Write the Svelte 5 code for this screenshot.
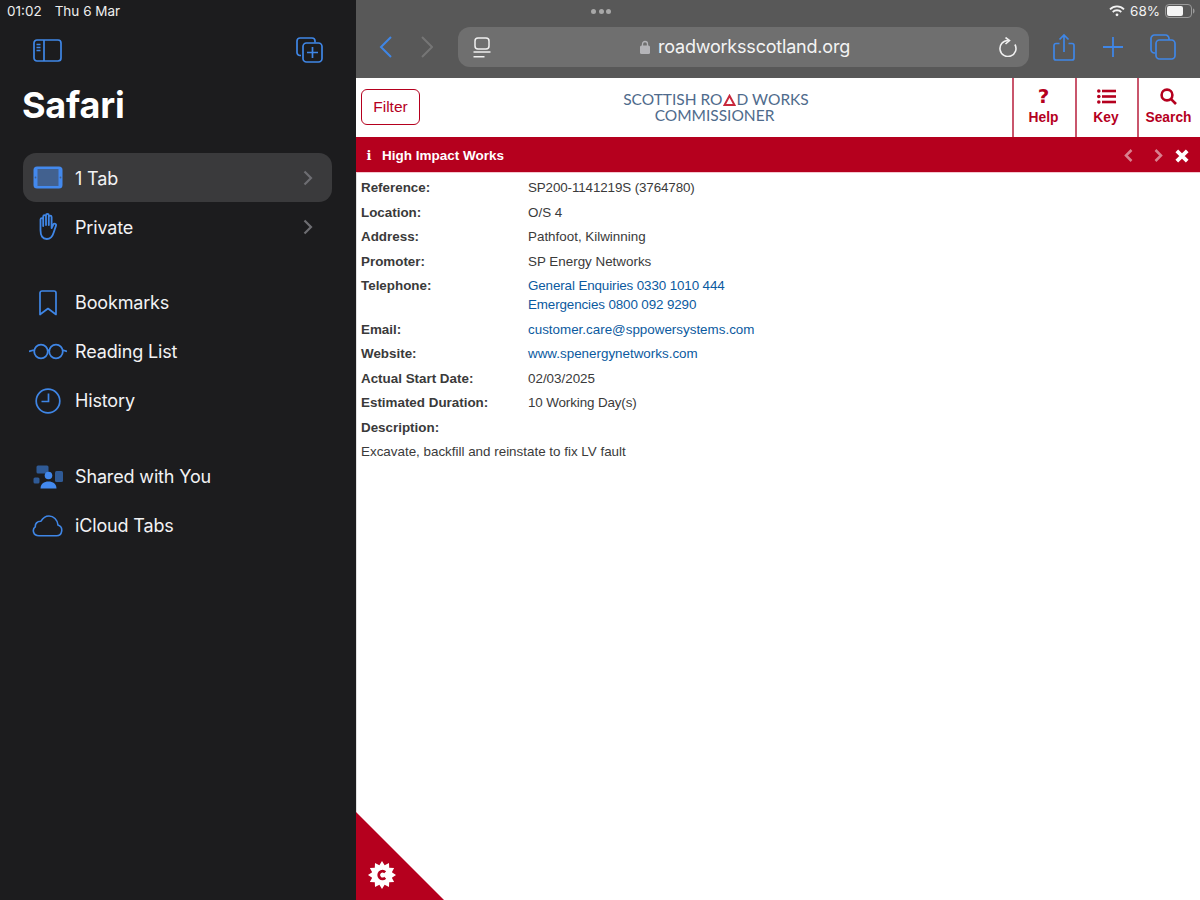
<script>
  const rows = [
    { label: 'Reference:', value: 'SP200-1141219S (3764780)', tight: true },
    { label: 'Location:', value: 'O/S 4' },
    { label: 'Address:', value: 'Pathfoot, Kilwinning' },
    { label: 'Promoter:', value: 'SP Energy Networks' },
    { label: 'Telephone:', value: 'General Enquiries 0330 1010 444\nEmergencies 0800 092 9290', link: true, tight: true },
    { label: 'Email:', value: 'customer.care@sppowersystems.com', link: true },
    { label: 'Website:', value: 'www.spenergynetworks.com', link: true },
    { label: 'Actual Start Date:', value: '02/03/2025' },
    { label: 'Estimated Duration:', value: '10 Working Day(s)', tight: true },
    { label: 'Description:', value: '' }
  ];

  // 12 point badge for the corner logo
  const star = Array.from({ length: 24 }, (_, i) => {
    const r = i % 2 ? 10.2 : 14;
    const a = (i * Math.PI) / 12;
    return `${(r * Math.sin(a)).toFixed(2)},${(-r * Math.cos(a)).toFixed(2)}`;
  }).join(' ');
</script>

<div class="screen">
  <aside class="sidebar">
    <div class="clock"><span>01:02</span><span>Thu 6 Mar</span></div>
    <div class="side-tools">
      <svg width="30" height="23" viewBox="0 0 30 23" fill="none" stroke="#3f86e6" stroke-width="1.7">
        <rect x="1" y="1" width="27" height="21" rx="3" />
        <path d="M11 1v21M3.500 5.500h4M3.500 8.500h4M3.500 11.500h4" />
      </svg>
      <svg width="27" height="26" viewBox="0 0 27 26" fill="none" stroke="#3f86e6" stroke-width="1.7">
        <path d="M5 18.500H4a3 3 0 0 1-3-3V4a3 3 0 0 1 3-3h12a3 3 0 0 1 3 3v1.500" />
        <rect x="7" y="6" width="19" height="19" rx="3.500" />
        <path d="M16.500 10v11M11 15.500h11" />
      </svg>
    </div>
    <h1>Safari</h1>

    <nav class="group first">
      <div class="item active">
        <span class="ico">
          <svg width="30" height="23" viewBox="0 0 30 23">
            <rect x="0.500" y="0.500" width="29" height="22" rx="3.500" fill="#4389ee" />
            <rect x="4.500" y="3" width="21" height="17" fill="#42618f" />
            <circle cx="2.500" cy="11.500" r="0.900" fill="#42618f" />
            <circle cx="27.500" cy="11.500" r="0.900" fill="#42618f" />
          </svg>
        </span>
        <span class="name">1 Tab</span>
        <svg class="chev" width="10" height="16" viewBox="0 0 10 16" fill="none" stroke="#6d6d72" stroke-width="2.200"><path d="M1.500 1.500 8 8l-6.500 6.500" /></svg>
      </div>
      <div class="item">
        <span class="ico">
          <svg width="21" height="27" viewBox="0 0 21 27" fill="none" stroke="#3f86e6" stroke-width="1.800" stroke-linejoin="round" stroke-linecap="round">
            <path d="M3.500 17V6.500a1.300 1.300 0 0 1 2.700 0V13M6.200 13V3.500a1.400 1.400 0 0 1 2.800 0V12M9 12V2.300a1.400 1.400 0 0 1 2.800 0V12M11.800 12V4a1.400 1.400 0 0 1 2.800 0v11l1.700-3.500c.8-1.600 3.400-.8 2.700 1.100l-2.300 6.900C15.500 23.500 13.500 26 9.800 26 5.500 26 3.500 23 3.500 17" />
          </svg>
        </span>
        <span class="name">Private</span>
        <svg class="chev" width="10" height="16" viewBox="0 0 10 16" fill="none" stroke="#6d6d72" stroke-width="2.200"><path d="M1.500 1.500 8 8l-6.500 6.500" /></svg>
      </div>
    </nav>

    <nav class="group">
      <div class="item">
        <span class="ico">
          <svg width="18" height="26" viewBox="0 0 18 26" fill="none" stroke="#3f86e6" stroke-width="1.700" stroke-linejoin="round">
            <path d="M1 3a2 2 0 0 1 2-2h12a2 2 0 0 1 2 2v21.500l-8-6-8 6z" />
          </svg>
        </span>
        <span>Bookmarks</span>
      </div>
      <div class="item">
        <span class="ico">
          <svg width="38" height="17" viewBox="0 0 38 17" fill="none" stroke="#3f86e6" stroke-width="1.800">
            <circle cx="12" cy="8.500" r="6.800" />
            <circle cx="27" cy="8.500" r="6.800" />
            <path d="M0 8.500 5 7M18.500 7.500q1-.7 2 0M33.500 7l4.500 1.500" />
          </svg>
        </span>
        <span>Reading List</span>
      </div>
      <div class="item">
        <span class="ico">
          <svg width="26" height="26" viewBox="0 0 26 26" fill="none" stroke="#3f86e6" stroke-width="1.700">
            <circle cx="13" cy="13" r="11.800" />
            <path d="M13.500 5.500V13.500H6.500" />
          </svg>
        </span>
        <span>History</span>
      </div>
    </nav>

    <nav class="group last">
      <div class="item">
        <span class="ico">
          <svg width="30" height="24" viewBox="0 0 30 24">
            <rect x="3.500" y="0.500" width="12" height="8" rx="1.500" fill="#2f5a96" />
            <rect x="0.500" y="12.500" width="6" height="6" rx="1.500" fill="#2f5a96" />
            <rect x="22" y="6" width="8" height="11" rx="1.500" fill="#2f5a96" />
            <circle cx="15.500" cy="10.500" r="3.800" fill="#4389ee" />
            <path d="M7.500 23.500c0-4.500 3.500-7 8-7s8 2.500 8 7z" fill="#4389ee" />
          </svg>
        </span>
        <span>Shared with You</span>
      </div>
      <div class="item">
        <span class="ico">
          <svg width="31" height="22" viewBox="0 0 31 22" fill="none" stroke="#3f86e6" stroke-width="1.600" stroke-linejoin="round">
            <path d="M7 20.800h17.500a5.500 5.500 0 0 0 1.500-10.700C25.500 4.500 21.500 1 17 1c-4 0-6.500 2.500-8 5.200C5 6 3 9 3.300 11.800.200 13.800.500 20.800 7 20.800z" />
          </svg>
        </span>
        <span>iCloud Tabs</span>
      </div>
    </nav>
  </aside>

  <main class="main">
    <div class="chrome">
      <div class="status">
        <div class="dots"><i></i><i></i><i></i></div>
        <div class="sys">
          <svg width="16" height="12" viewBox="0 0 16 12" fill="none" stroke="#f2f2f2" stroke-width="1.800">
            <path d="M1 4.300a10 10 0 0 1 14 0" />
            <path d="M3.700 7a6.200 6.200 0 0 1 8.600 0" />
            <circle cx="8" cy="9.800" r="1.400" fill="#f2f2f2" stroke="none" />
          </svg>
          <span>68%</span>
          <svg width="30" height="14" viewBox="0 0 30 14">
            <rect x="0.500" y="0.500" width="26" height="13" rx="3.500" fill="none" stroke="#9a9a9a" />
            <rect x="2" y="2" width="16" height="10" rx="2" fill="#f5f5f5" />
            <path d="M28 4.500c1 .3 1.500 1.200 1.500 2.500s-.5 2.200-1.500 2.500z" fill="#9a9a9a" />
          </svg>
        </div>
      </div>
      <div class="toolbar">
        <svg class="back" width="13" height="22" viewBox="0 0 13 22" fill="none" stroke="#3f86e6" stroke-width="2"><path d="M12 1 2 11l10 10" /></svg>
        <svg class="fwd" width="12" height="22" viewBox="0 0 12 22" fill="none" stroke="#757575" stroke-width="2"><path d="M1 1l10 10L1 21" /></svg>
        <div class="urlbar">
          <svg width="18" height="21" viewBox="0 0 18 21" fill="none" stroke="#f0f0f0" stroke-width="1.500">
            <rect x="2" y="1" width="14" height="11" rx="3" />
            <path d="M0.500 15h17M0.500 19.800h11" />
          </svg>
          <div class="addr">
            <svg width="10" height="14" viewBox="0 0 10 14"><path d="M2.500 6V4a2.500 2.500 0 0 1 5 0v2" fill="none" stroke="#b4b4b8" stroke-width="1.300" /><rect y="5.500" width="10" height="8.500" rx="1.500" fill="#b4b4b8" /></svg>
            <span>roadworksscotland.org</span>
          </div>
          <svg width="18" height="20" viewBox="0 0 18 20" fill="none" stroke="#f0f0f0" stroke-width="1.600">
            <path d="M15.900 7.500A8 8 0 1 1 9 3.500" />
            <path d="M6.500 0.500 10.500 3.500 6.500 7" />
          </svg>
        </div>
        <svg class="t-share" width="22" height="27" viewBox="0 0 22 27" fill="none" stroke="#3f86e6" stroke-width="1.700">
          <path d="M6.500 9.500H3a2 2 0 0 0-2 2V24a2 2 0 0 0 2 2h16a2 2 0 0 0 2-2V11.500a2 2 0 0 0-2-2h-3.500" />
          <path d="M11 18V1.500M6.500 5.500 11 1l4.500 4.500" />
        </svg>
        <svg class="t-plus" width="20" height="20" viewBox="0 0 20 20" fill="none" stroke="#3f86e6" stroke-width="1.800"><path d="M10 0v20M0 10h20" /></svg>
        <svg class="t-tabs" width="26" height="26" viewBox="0 0 26 26" fill="none" stroke="#3f86e6" stroke-width="1.700">
          <path d="M5 19H4.500A3.500 3.500 0 0 1 1 15.500V4.500A3.500 3.500 0 0 1 4.500 1h11A3.500 3.500 0 0 1 19 4.500V6" />
          <rect x="6" y="6" width="19" height="19" rx="3.500" />
        </svg>
      </div>
    </div>

    <header class="site-head">
      <button class="filter">Filter</button>
      <div class="logo">
        <div>SCOTTISH RO<svg width="13" height="12" viewBox="0 0 13 12" fill="none" stroke="#c8283c" stroke-width="2"><path d="M6.500 1.800 11.500 11h-10z" /></svg>D WORKS</div>
        <div class="logo-sub">COMMISSIONER</div>
      </div>
      <div class="cell">
        <span class="q">?</span>
        <span>Help</span>
      </div>
      <div class="cell key">
        <svg width="19" height="15" viewBox="0 0 19 15" fill="#b5001e">
          <circle cx="1.800" cy="2" r="1.800" /><circle cx="1.800" cy="7.500" r="1.800" /><circle cx="1.800" cy="13" r="1.800" />
          <rect x="5" y="0.700" width="14" height="2.600" /><rect x="5" y="6.200" width="14" height="2.600" /><rect x="5" y="11.700" width="14" height="2.600" />
        </svg>
        <span>Key</span>
      </div>
      <div class="cell">
        <svg width="17" height="17" viewBox="0 0 17 17" fill="none" stroke="#b5001e" stroke-width="2.600">
          <circle cx="7" cy="7" r="5.400" /><path d="M10.800 10.800 16 16" />
        </svg>
        <span>Search</span>
      </div>
    </header>

    <div class="banner">
      <span class="info">i</span>
      <span class="title">High Impact Works</span>
      <svg class="b-prev" width="9" height="13" viewBox="0 0 9 13" fill="none" stroke="#d9808f" stroke-width="2.500"><path d="M7.500 1 2 6.500 7.500 12" /></svg>
      <svg class="b-next" width="9" height="13" viewBox="0 0 9 13" fill="none" stroke="#d9808f" stroke-width="2.500"><path d="M1.500 1 7 6.500 1.500 12" /></svg>
      <svg class="b-close" width="14" height="14" viewBox="0 0 14 14" fill="none" stroke="#fff" stroke-width="3.800"><path d="M1.800 1.800l10.400 10.400M12.200 1.800 1.800 12.200" /></svg>
    </div>

    <section class="details">
      {#each rows as row}
        <div class="row">
          <strong>{row.label}</strong>
          <span class:link={row.link} class:tight={row.tight}>{row.value}</span>
        </div>
      {/each}
      <p>Excavate, backfill and reinstate to fix LV fault</p>
    </section>

    <div class="corner">
      <svg width="30" height="30" viewBox="-15 -15 30 30">
        <polygon fill="#fff" points={star} />
        <path d="M3.200 -2.700A3.800 3.800 0 1 0 3.200 2.700" fill="none" stroke="#b5001e" stroke-width="2.800" />
      </svg>
    </div>
  </main>
</div>

<style>
  :global(body) {
    margin: 0;
    background: #fff;
  }

  .screen {
    display: flex;
    width: 1200px;
    height: 900px;
    overflow: hidden;
    font-family: "Liberation Sans", Arial, sans-serif;
  }

  .sidebar {
    width: 356px;
    flex: none;
    box-sizing: border-box;
    background: #1c1c1e;
    color: #f2f2f4;
    font-family: Inter, "Noto Sans", sans-serif;
  }

  .clock {
    display: flex;
    gap: 13px;
    padding: 3px 0 0 7px;
    height: 19px;
    font-size: 13.500px;
    line-height: 17px;
    color: #eee;
  }

  .side-tools {
    display: flex;
    justify-content: space-between;
    align-items: center;
    padding: 15px 33px 0 33px;
    height: 26px;
  }

  h1 {
    margin: 20px 0 0 22px;
    font-size: 36px;
    line-height: 44px;
    font-weight: 700;
    letter-spacing: -0.2px;
    color: #fff;
  }

  .group {
    margin: 0 24px 26px 23px;
  }

  .group.first {
    margin-top: 26px;
    margin-bottom: 27px;
  }

  .group.last {
    margin-top: 27px;
  }

  .item {
    display: flex;
    align-items: center;
    height: 49px;
    font-size: 18px;
    letter-spacing: -0.15px;
    border-radius: 13px;
  }

  .name {
    padding-top: 2px;
  }

  .active {
    background: #3a3a3c;
  }

  .ico {
    width: 49px;
    margin-right: 3px;
    display: flex;
    justify-content: center;
    flex: none;
  }

  .chev {
    margin-left: auto;
    margin-right: 19px;
  }

  .main {
    position: relative;
    flex: 1;
    background: #fff;
  }

  .chrome {
    height: 78px;
    background: #585858;
  }

  .status {
    display: flex;
    align-items: center;
    height: 22px;
    color: #f2f2f2;
    font-family: Inter, sans-serif;
    font-size: 13.500px;
  }

  .dots {
    display: flex;
    gap: 2.500px;
    margin-left: 235px;
  }

  .dots i {
    width: 5px;
    height: 5px;
    border-radius: 50%;
    background: #a8a8a8;
  }

  .sys {
    display: flex;
    align-items: center;
    margin-left: auto;
    margin-right: 5px;
    gap: 5px;
  }

  .toolbar {
    display: flex;
    align-items: center;
    height: 40px;
    margin-top: 5px;
  }

  .back {
    margin-left: 23px;
  }

  .fwd {
    margin-left: 29px;
  }

  .urlbar {
    display: flex;
    align-items: center;
    justify-content: space-between;
    width: 571px;
    height: 40px;
    box-sizing: border-box;
    margin-left: 25px;
    padding: 0 12px 0 15px;
    background: #6f6f6f;
    border-radius: 12px;
  }

  .addr {
    display: flex;
    align-items: center;
    gap: 8px;
    padding-bottom: 1px;
    color: #f4f4f4;
    font-family: Inter, sans-serif;
    font-size: 18px;
    letter-spacing: -0.2px;
  }

  .t-share {
    margin-left: 24px;
  }

  .t-plus {
    margin-left: 28px;
  }

  .t-tabs {
    margin-left: 27px;
  }

  .site-head {
    display: flex;
    height: 59px;
    align-items: stretch;
  }

  .filter {
    align-self: center;
    width: 59px;
    height: 36px;
    margin: 0 0 2px 5px;
    padding: 0;
    border: 1px solid #b5001e;
    border-radius: 6px;
    background: #fff;
    color: #b5001e;
    font: 15.500px "Liberation Sans", Arial, sans-serif;
  }

  .logo {
    flex: 1;
    display: flex;
    flex-direction: column;
    justify-content: center;
    align-items: center;
    padding-bottom: 2px;
    color: #4f6b8c;
    font-family: Lato, "Open Sans", sans-serif;
    font-size: 15.500px;
    line-height: 16px;
  }

  .logo svg {
    margin: 0 0.500px -1px;
  }

  .logo-sub {
    padding-right: 3px;
  }

  .cell {
    width: 59px;
    border-left: 2px solid #c9566c;
    display: flex;
    flex-direction: column;
    align-items: center;
    justify-content: flex-start;
    padding: 10px 2px 0 0;
    height: 49px;
    color: #b5001e;
    font-size: 13.800px;
    font-weight: 700;
    gap: 5px;
  }

  .cell svg {
    height: 17px;
  }

  .cell.key {
    width: 58px;
  }

  .q {
    font-size: 20px;
    line-height: 17px;
    font-weight: 700;
    font-family: "DejaVu Sans", sans-serif;
  }

  .banner {
    display: flex;
    align-items: center;
    height: 33px;
    padding-top: 2px;
    background: #b5001e;
    color: #fff;
    font-size: 13.500px;
    font-weight: 700;
    border-bottom: 1px solid #f4c8d0;
  }

  .info {
    width: 26px;
    text-align: center;
    font-family: "DejaVu Serif", serif;
    font-size: 13px;
  }

  .b-prev {
    margin-left: auto;
  }

  .b-next {
    margin-left: 21px;
  }

  .b-close {
    margin: 0 11px 0 12px;
  }

  .details {
    padding: 2.500px 5px 0 4px;
    border-left: 1px solid #e0e0e0;
    height: 700px;
    font-size: 13.400px;
    line-height: 19px;
    color: #3a3a3a;
  }

  .row {
    display: grid;
    grid-template-columns: 167px 1fr;
    padding: 2.750px 0;
  }

  .row span {
    white-space: pre-line;
  }

  .link {
    color: #0b5aa0;
  }

  .tight {
    letter-spacing: -0.12px;
  }

  .details p {
    margin: 2.750px 0;
  }

  .corner {
    position: absolute;
    left: 0;
    bottom: 0;
    width: 88px;
    height: 88px;
    background: #b5001e;
    clip-path: polygon(0 0, 100% 100%, 0 100%);
  }

  .corner svg {
    position: absolute;
    left: 11px;
    top: 48px;
  }
</style>
